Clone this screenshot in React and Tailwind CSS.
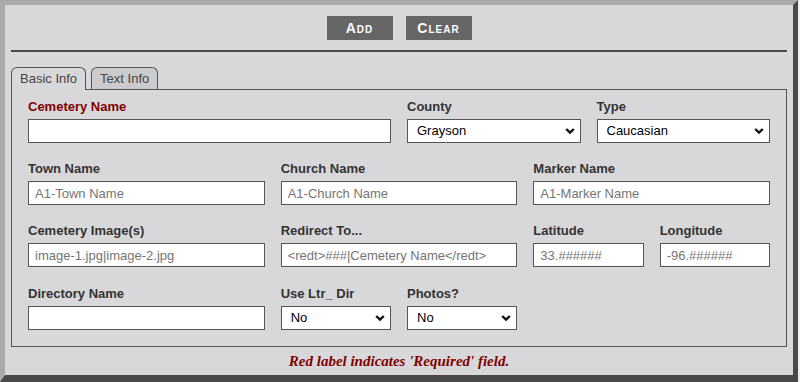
import React from 'react';

// Small bold chevron used for the select boxes
const Chevron = () => (
  <svg
    width="10"
    height="7"
    viewBox="0 0 10 7"
    className="pointer-events-none absolute right-[6px] top-1/2 -translate-y-1/2"
  >
    <path d="M1.2 1.5L5 5.2l3.8-3.7" fill="none" stroke="#111" strokeWidth="2.4" />
  </svg>
);

function Field({ label, required, children, className = '' }) {
  return (
    <div className={className}>
      <label
        className={`block h-4 text-[13px] leading-4 font-bold mb-1 ${
          required ? 'text-[#800000]' : 'text-[#333]'
        }`}
      >
        {label}
      </label>
      {children}
    </div>
  );
}

function TextBox({ placeholder = '' }) {
  return (
    <input
      type="text"
      placeholder={placeholder}
      className="block h-6 w-full border border-[#555] bg-white px-[6px] text-[13px] text-black placeholder:text-[#757575] outline-none"
    />
  );
}

function SelectBox({ value, options }) {
  return (
    <div className="relative">
      <select
        defaultValue={value}
        className="block h-6 w-full appearance-none border border-[#555] bg-white pl-[9px] text-[13px] text-black outline-none"
      >
        {options.map((o) => (
          <option key={o}>{o}</option>
        ))}
      </select>
      <Chevron />
    </div>
  );
}

export default function App() {
  return (
    <div className="min-h-screen bg-[#f0f0f0] font-[Liberation_Sans,Arial,sans-serif]">
      <div className="w-[798px] h-[382px] bg-[#d8d8da] border-[5px] border-b-[7px] border-t-[#aaaaaa] border-l-[#aaaaaa] border-r-[#4a4a4a] border-b-[#4a4a4a] px-[6px]">
        {/* Buttons */}
        <div className="flex justify-center gap-[13px] pt-[11px]">
          <button className="h-6 w-[66px] bg-[#666667] text-white text-[14px] font-bold [font-variant:small-caps] tracking-[1px]">
            Add
          </button>
          <button className="h-6 w-[66px] bg-[#666667] text-white text-[14px] font-bold [font-variant:small-caps] tracking-[1px]">
            Clear
          </button>
        </div>
        <div className="mt-[10px] h-[2px] bg-[#4a4a4a]" />

        {/* Tabs */}
        <div className="mt-[15px] flex items-end gap-[5px]">
          <div className="relative z-10 -mb-px h-[23px] rounded-t-[6px] border border-b-0 border-[#555] bg-[#d8d8da] px-[8px] text-[13px] leading-[21px] text-[#444]">
            Basic Info
          </div>
          <div className="h-[22px] rounded-t-[6px] border border-b-0 border-[#555] bg-[#cbcbcd] px-[8px] text-[13px] leading-[21px] text-[#444]">
            Text Info
          </div>
        </div>

        {/* Panel */}
        <div className="border border-[#555] px-4 pt-[9px] pb-4">
          <div className="grid grid-cols-4 gap-x-4">
            <Field label="Cemetery Name" required className="col-span-2">
              <TextBox />
            </Field>
            <Field label="County">
              <SelectBox value="Grayson" options={['Grayson', 'Fannin', 'Collin', 'Cooke']} />
            </Field>
            <Field label="Type">
              <SelectBox value="Caucasian" options={['Caucasian', 'African American', 'Hispanic']} />
            </Field>
          </div>

          <div className="mt-[18px] grid grid-cols-6 gap-x-4">
            <Field label="Town Name" className="col-span-2">
              <TextBox placeholder="A1-Town Name" />
            </Field>
            <Field label="Church Name" className="col-span-2">
              <TextBox placeholder="A1-Church Name" />
            </Field>
            <Field label="Marker Name" className="col-span-2">
              <TextBox placeholder="A1-Marker Name" />
            </Field>
          </div>

          <div className="mt-[18px] grid grid-cols-6 gap-x-4">
            <Field label="Cemetery Image(s)" className="col-span-2">
              <TextBox placeholder="image-1.jpg|image-2.jpg" />
            </Field>
            <Field label="Redirect To..." className="col-span-2">
              <TextBox placeholder="<redt>###|Cemetery Name</redt>" />
            </Field>
            <Field label="Latitude">
              <TextBox placeholder="33.######" />
            </Field>
            <Field label="Longitude">
              <TextBox placeholder="-96.######" />
            </Field>
          </div>

          <div className="mt-[19px] grid grid-cols-6 gap-x-4">
            <Field label="Directory Name" className="col-span-2">
              <TextBox />
            </Field>
            <Field label="Use Ltr_ Dir">
              <SelectBox value="No" options={['No', 'Yes']} />
            </Field>
            <Field label="Photos?">
              <SelectBox value="No" options={['No', 'Yes']} />
            </Field>
          </div>
        </div>

        <p className="mt-[4px] text-center text-[15px] leading-5 font-bold italic text-[#800000] font-[Liberation_Serif,Times_New_Roman,serif]">
          Red label indicates 'Required' field.
        </p>
      </div>
    </div>
  );
}
